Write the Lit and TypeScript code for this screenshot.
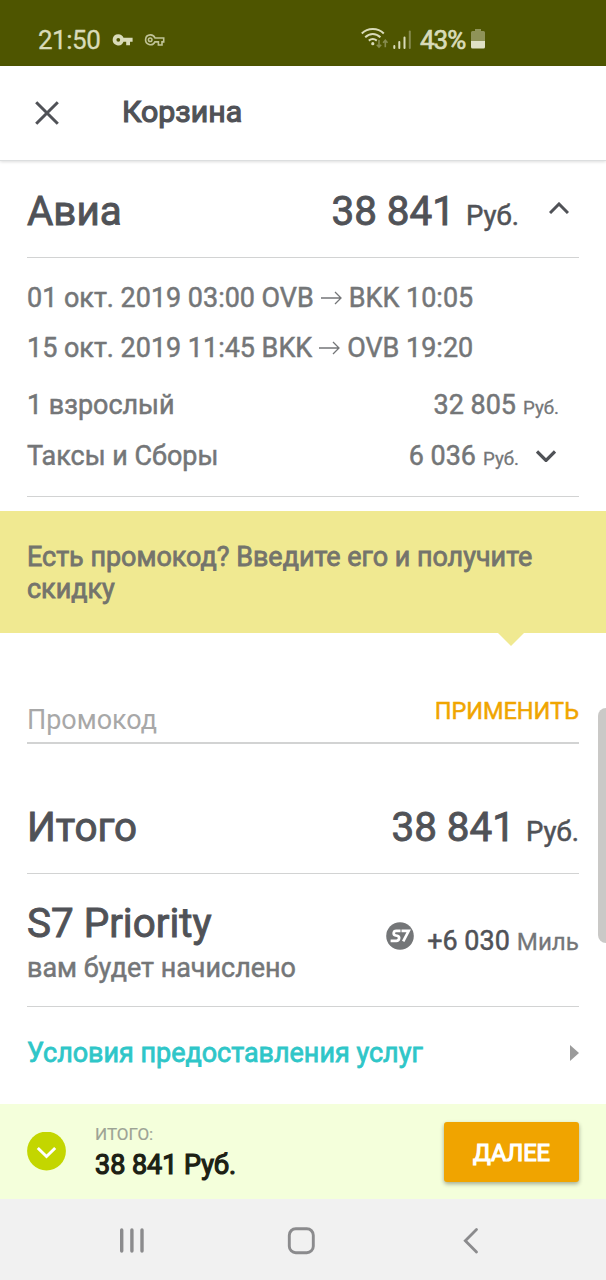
import { LitElement, html, css } from "lit";
import { customElement } from "lit/decorators.js";

const arrow = html`<svg class="arrow" width="21" height="14" viewBox="0 0 21 14"><path d="M0 7H20M14 1l6 6-6 6" /></svg>`;

@customElement("status-bar")
class StatusBar extends LitElement {
  static styles = css`
    :host { display: flex; height: 66px; box-sizing: border-box; padding: 14px 121px 0 38px; background: #4e5500; color: #d9dbb9; font: 400 26px/52px Roboto, sans-serif; -webkit-text-stroke: 0.3px; }
    .time { width: 74px; letter-spacing: -0.5px; }
    .icons { flex: 1; }
    .pct { width: 51px; font-size: 26px; -webkit-text-stroke: 0.7px; letter-spacing: -1px; }
    .signal { width: 59px; }
    svg { display: block; }
    .bat { width: 14px; }
  `;
  render() {
    return html`
      <span class="time">21:50</span>
      <span class="icons">
        <svg width="56" height="52" viewBox="0 0 56 52" fill="none">
          <path fill="#d9dbb9" fill-rule="evenodd" d="M6.300 20.200a5.600 5.600 0 1 0 5.200 7.600H14.200v3.500h3.800v-3.500h2.600v-4H11.500A5.600 5.600 0 0 0 6.300 20.200Zm0 3.700a1.900 1.900 0 1 1 0 3.800 1.900 1.900 0 0 1 0-3.800Z" />
          <path stroke="#c0c396" stroke-width="1.600" d="M38.300 20.900a4.900 4.900 0 1 0 4.600 7h3.500v3.100h3.600v-3.100h1.700v-3.900H43a4.900 4.900 0 0 0-4.700-3.100Z" />
          <circle cx="38.200" cy="25.800" r="1.800" stroke="#c0c396" stroke-width="1.500" />
        </svg>
      </span>
      <svg class="signal" width="59" height="52" viewBox="0 0 59 52" fill="none" stroke="#d9dbb9" stroke-width="2">
        <path d="M.8 19.500c6-6 16-6 22 0M4.200 23.300c4.500-4.300 10.700-4.300 15.200 0M7.800 26.600c2.500-2 5.500-2 8 0" />
        <circle cx="11.800" cy="29.700" r="1.600" fill="#d9dbb9" stroke="none" />
        <g stroke="#868b4e" stroke-width="1.600"><path d="M18 26v7M15.800 30.700l2.200 2.400 2.200-2.400M24.300 33.300v-7M22.100 28.700l2.200-2.400 2.200 2.400" /></g>
        <path stroke-linecap="round" d="M33.300 32v2M38.300 28v6M43.500 23.500V34" />
        <path stroke="#868b4e" stroke-linecap="round" d="M48.800 17.500V34" />
      </svg>
      <span class="pct">43%</span>
      <svg class="bat" width="14" height="52" viewBox="0 0 14 52">
        <path fill="#8f9358" d="M1.500 17H4v-2h6v2h2.500q1.500 0 1.500 1.500V28H0v-9.500Q0 17 1.500 17Z" />
        <path fill="#e0e1c5" d="M0 27h14v6q0 1.500-1.500 1.500h-11Q0 34.500 0 33Z" />
      </svg>
    `;
  }
}

@customElement("system-nav")
class SystemNav extends LitElement {
  static styles = css`
    :host { display: flex; height: 81px; padding-left: 47px; box-sizing: border-box; background: #f1f1f1; }
    svg { display: block; width: 170px; height: 81px; fill: none; stroke: #8b8b8d; stroke-width: 3.400; stroke-linecap: round; }
  `;
  render() {
    return html`
      <svg viewBox="0 0 170 81"><path d="M74.700 31V52M84.900 31V52M95 31V52" /></svg>
      <svg viewBox="0 0 170 81"><rect x="72.300" y="29.700" width="24" height="24" rx="6.500" stroke-width="2.900" /></svg>
      <svg viewBox="0 0 170 81"><path stroke-width="2.800" d="M89.500 30.500L78.300 41.700 89.500 53" /></svg>
    `;
  }
}

@customElement("app-root")
class AppRoot extends LitElement {
  static styles = css`
    :host { display: flex; flex-direction: column; position: relative; width: 606px; height: 1280px; overflow: hidden; background: #fff; color: #505257; font: 400 26.950px/32px Roboto, sans-serif; -webkit-text-stroke: 0.5px; }
    svg { display: block; flex: none; }
    .header { display: flex; align-items: center; height: 94px; padding-left: 35px; border-bottom: 1px solid #dcdedf; box-shadow: 0 1px 3px #0002; }
    .header h1 { margin: 0 0 2px 63px; font-size: 30.300px; line-height: 40px; font-weight: 400; -webkit-text-stroke: 1.200px; }
    .page { height: 943px; padding: 0 27px; }
    .row { display: flex; align-items: baseline; justify-content: space-between; box-sizing: border-box; }
    .line { border-bottom: 1px solid #d2d3d3; }
    .big { font-size: 40.400px; line-height: 50px; -webkit-text-stroke: 0.900px; }
    .mid { font-size: 27.500px; }
    .small { font-size: 18.700px; -webkit-text-stroke: 0.300px; }
    .grey { color: #747678; }
    .avia { height: 97px; padding-top: 26px; }
    .avia-price { display: flex; align-items: baseline; gap: 11px; }
    .avia-price svg { margin: 0 10px 8px 19px; align-self: center; }
    .flight { display: flex; align-items: center; height: 50px; }
    .flights { padding-top: 15px; }
    .arrow { margin: 0 7px; fill: none; stroke: #747678; stroke-width: 1.300; }
    .fare { height: 51px; padding-top: 16px; }
    .fare .small { margin-left: 7px; }
    .adult { padding-right: 20px; }
    .taxes { height: 73px; }
    .tax-price { display: flex; align-items: baseline; }
    .tax-price svg { margin: 0 23px 4px 17px; align-self: center; }
    .promo { margin: 14px -27px 0; height: 122px; padding: 30px 27px 0; box-sizing: border-box; background: #f0e991; color: #74746c; position: relative; -webkit-text-stroke: 0.800px; }
    .promo::after { content: ""; position: absolute; left: 498px; top: 100%; border: 13.500px solid transparent; border-bottom: 0; border-top-color: #f0e991; }
    .code { height: 111px; padding-top: 70px; border-bottom: 2px solid #d2d3d3; }
    .placeholder { -webkit-text-stroke: 0; color: #a8a8a8; position: relative; top: 1px; }
    .apply { color: #f0a500; font-size: 23.500px; position: relative; top: -9px; }
    .total { height: 130px; padding-top: 59px; }
    .price { display: flex; align-items: baseline; gap: 11px; }
    .bonus { height: 133px; padding-top: 25px; }
    .bonus .big { display: block; }
    .note { display: block; margin-top: 3px; }
    .miles { display: flex; align-items: baseline; position: relative; top: 13px; }
    .miles svg { margin-right: 13px; }
    .miles .grey { margin-left: 7px; font-size: 24.200px; -webkit-text-stroke: 0.300px; }
    .terms { height: 92px; align-items: center; color: #2fc6c8; -webkit-text-stroke: 0.800px; }
    .footer { display: flex; align-items: center; height: 95px; box-sizing: border-box; padding: 0 27px; background: #f4ffdb; }
    .sum { flex: 1; margin-left: 28px; padding-top: 2px; display: flex; flex-direction: column; color: #1c2014; }
    .sum .label { font-size: 17px; line-height: 24px; color: #9da395; -webkit-text-stroke: 0.200px; }
    .sum .value { line-height: 38px; -webkit-text-stroke: 1.200px; }
    .next { width: 135px; height: 60px; padding: 2px 0 0; border: 0; border-radius: 3px; background: #f0a400; color: #fff; font: 400 23.600px/58px Roboto, sans-serif; -webkit-text-stroke: 1.200px; box-shadow: 0 2px 4px #0005; }
    .scroll { position: absolute; right: -8px; top: 708px; width: 16px; height: 235px; border-radius: 8px; background: #cac9c7; }
  `;
  render() {
    return html`
      <status-bar></status-bar>
      <div class="header">
        <svg width="24" height="24" viewBox="0 0 24 24"><path fill="none" stroke="#505257" stroke-width="3" d="M1.200 1.200l21.600 21.600M22.800 1.200L1.200 22.800" /></svg>
        <h1>Корзина</h1>
      </div>
      <div class="page">
        <div class="row line avia">
          <span class="big">Авиа</span>
          <span class="avia-price"><span class="big">38 841</span><span class="mid">Руб.</span>
            <svg width="20" height="12" viewBox="0 0 20 12"><path fill="none" stroke="#505257" stroke-width="3" d="M1 11l9-9 9 9" /></svg></span>
        </div>
        <div class="flights grey">
          <div class="flight"><span>01 окт. 2019 03:00 OVB</span>${arrow}<span>BKK 10:05</span></div>
          <div class="flight"><span>15 окт. 2019 11:45 BKK</span>${arrow}<span>OVB 19:20</span></div>
        </div>
        <div class="row fare adult grey"><span>1 взрослый</span><span>32 805<span class="small">Руб.</span></span></div>
        <div class="row fare taxes line grey">
          <span>Таксы и Сборы</span>
          <span class="tax-price">6 036<span class="small">Руб.</span>
            <svg width="20" height="12" viewBox="0 0 20 12"><path fill="none" stroke="#505257" stroke-width="3.200" d="M1 1.500l9 9 9-9" /></svg></span>
        </div>
        <div class="promo">Есть промокод? Введите его и получите скидку</div>
        <div class="row code"><span class="placeholder">Промокод</span><span class="apply">ПРИМЕНИТЬ</span></div>
        <div class="row line total"><span class="big">Итого</span><span class="price"><span class="big">38 841</span><span class="mid">Руб.</span></span></div>
        <div class="row line bonus">
          <span><span class="big">S7 Priority</span><span class="note grey">вам будет начислено</span></span>
          <span class="miles">
            <svg width="28" height="28" viewBox="0 0 28 28"><circle cx="14" cy="14" r="13.800" fill="#747678" />
              <path fill="none" stroke="#fff" stroke-width="2.700" d="M14.500 8.800H10.200c-3 0-3.500 4.200-.5 4.700l1.500.3c3 .6 2.300 5-.8 5H4.600M15.500 8.800h7.200l-5.500 10.500" /></svg>
            <span>+6 030</span><span class="grey">Миль</span>
          </span>
        </div>
        <div class="row terms"><span>Условия предоставления услуг</span>
          <svg width="9" height="16" viewBox="0 0 9 16"><path fill="#9b9b9b" d="M0 0l9 8-9 8Z" /></svg></div>
      </div>
      <div class="footer">
        <svg width="40" height="40" viewBox="0 0 40 40"><circle cx="19.500" cy="19" r="19.400" fill="#c3d600" /><path fill="none" stroke="#fff" stroke-width="3" d="M10.800 16l8.700 8.500 8.700-8.500" /></svg>
        <div class="sum"><span class="label">ИТОГО:</span><span class="value">38 841 Руб.</span></div>
        <button class="next">ДАЛЕЕ</button>
      </div>
      <system-nav></system-nav>
      <div class="scroll"></div>
    `;
  }
}
